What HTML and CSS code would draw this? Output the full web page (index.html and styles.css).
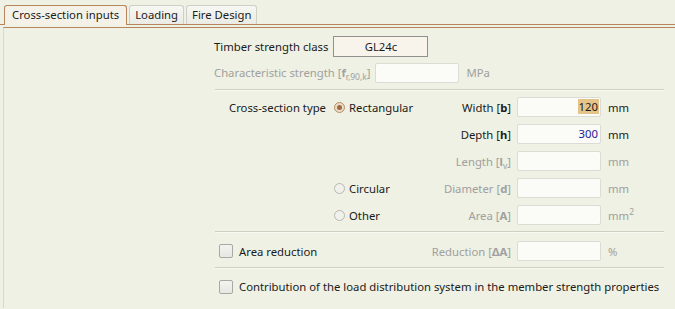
FILE: index.html
```html
<!DOCTYPE html>
<html lang="en">
<head>
<meta charset="UTF-8">
<meta name="viewport" content="width=device-width, initial-scale=1.0">
<title>Cross-section inputs</title>
<link rel="stylesheet" href="styles.css">
</head>
<body>
<div class="tabs">
  <div class="tab active">Cross-section inputs</div>
  <div class="tab">Loading</div>
  <div class="tab">Fire Design</div>
</div>
<div class="panel">
  <div class="form">
    <div class="row row-class">
      <span class="label">Timber strength class</span>
      <div class="class-box">GL24c</div>
    </div>
    <div class="row row-char">
      <span class="label muted">Characteristic strength [<b>f</b><sub>r,90,k</sub>]</span>
      <div class="field"></div>
      <span class="unit muted">MPa</span>
    </div>
    <div class="sep"></div>

    <div class="xs-grid">
      <span class="label xs-title">Cross-section type</span>
      <label class="radio-opt"><span class="radio checked"></span>Rectangular</label>
      <span class="label flabel">Width [<b>b</b>]</span>
      <div class="field"><span class="sel">120</span></div>
      <span class="unit">mm</span>

      <span></span><span></span>
      <span class="label flabel">Depth [<b>h</b>]</span>
      <div class="field"><span class="val">300</span></div>
      <span class="unit">mm</span>

      <span></span><span></span>
      <span class="label flabel muted">Length [<b>l</b><sub>v</sub>]</span>
      <div class="field"></div>
      <span class="unit muted">mm</span>

      <span></span>
      <label class="radio-opt"><span class="radio"></span>Circular</label>
      <span class="label flabel muted">Diameter [<b>d</b>]</span>
      <div class="field"></div>
      <span class="unit muted">mm</span>

      <span></span>
      <label class="radio-opt"><span class="radio"></span>Other</label>
      <span class="label flabel muted">Area [<b>A</b>]</span>
      <div class="field"></div>
      <span class="unit muted">mm<sup>2</sup></span>
    </div>
    <div class="sep"></div>

    <div class="xs-grid red-grid">
      <label class="check-opt"><span class="check"></span>Area reduction</label>
      <span class="label flabel muted">Reduction [<b>&Delta;A</b>]</span>
      <div class="field"></div>
      <span class="unit muted">%</span>
    </div>
    <div class="sep"></div>

    <label class="check-opt contrib"><span class="check"></span>Contribution of the load distribution system in the member strength properties</label>
  </div>
</div>
</body>
</html>
```
FILE: styles.css
```css
body {
  margin: 0;
  background-color: #eef1e3;
  font-family: "Noto Sans", "Liberation Sans", sans-serif;
  font-size: 11.3px;
  color: #1b1b1b;
  width: 675px;
  height: 309px;
  overflow: hidden;
}
.tabs {
  display: flex;
  align-items: flex-end;
  gap: 2px;
  padding: 5px 0 0 4px;
  height: 19px;
  border-bottom: 1px solid #b8865c;
}
.tab {
  height: 18px;
  line-height: 18px;
  padding: 0 5px;
  border: 1px solid #cfcfc8;
  border-bottom: none;
  border-radius: 3px 3px 0 0;
  background: linear-gradient(#f7f7f3, #ebebe5);
  color: #1b1b1b;
}
.tab.active {
  height: 19px;
  padding: 0 7px;
  border-color: #b8865c;
  background: #f4f2e8;
  position: relative;
  top: 1px;
}
.panel {
  margin-top: 2px;
  margin-left: 3px;
  border-top: 1px solid #b8865c;
  border-left: 1px solid #dcd8cc;
  height: 280px;
}
.form {
  margin-left: 210px;
  width: 450px;
  padding-top: 8px;
}
.label {
  white-space: nowrap;
}
.row {
  display: flex;
  align-items: center;
}
.row-class {
  height: 21px;
}
.row-class .label {
  margin-right: 5px;
}
.class-box {
  width: 93px;
  height: 19px;
  line-height: 19px;
  text-align: center;
  border: 1px solid #909090;
  background: #f8f3eb;
}
.row-char {
  margin-top: 5px;
  height: 21px;
}
.row-char .field {
  margin-left: 5px;
}
.row-char .unit {
  margin-left: 6px;
}
.muted {
  color: #a0a0a0;
}
b {
  font-weight: bold;
}
sub, sup {
  font-size: 8.5px;
  line-height: 0;
}
.field {
  width: 82px;
  height: 18px;
  border: 1px solid #dcdcd6;
  border-radius: 2px;
  background: #fbfbf8;
  text-align: right;
  line-height: 18px;
  box-sizing: content-box;
}
.sel {
  background: #e6c489;
  color: #1b1b1b;
  padding: 0 1px;
  margin-right: 1px;
}
.val {
  color: #1a1a9a;
  margin-right: 2px;
}
.sep {
  margin: 6px 0 0 1px;
  height: 1px;
  background: #cfd0c4;
  border-bottom: 1px solid #f8f9f2;
}
.xs-grid {
  display: grid;
  grid-template-columns: 114px 100px 71px 84px 1fr;
  grid-auto-rows: 20px;
  column-gap: 6px;
  row-gap: 7px;
  align-items: center;
  margin-top: 6px;
}
.xs-title {
  text-align: right;
  padding-right: 2px;
}
.flabel {
  text-align: right;
}
.unit {
  padding-left: 1px;
}
.radio-opt, .check-opt {
  display: flex;
  align-items: center;
  white-space: nowrap;
}
.radio {
  flex-shrink: 0;
  width: 9px;
  height: 9px;
  border: 1px solid #b8b8b0;
  border-radius: 50%;
  background: #f1f1ec;
  margin-right: 4px;
  position: relative;
}
.radio.checked {
  border-color: #b98c62;
  background: #e9dccd;
}
.radio.checked::after {
  content: "";
  position: absolute;
  left: 2px;
  top: 2px;
  width: 5px;
  height: 5px;
  border-radius: 50%;
  background: #a06a3a;
}
.red-grid {
  grid-template-columns: 211px 80px 84px 1fr;
  margin-top: 8px;
}
.check {
  flex-shrink: 0;
  width: 12px;
  height: 12px;
  border: 1px solid #a8a8a4;
  border-radius: 2px;
  background: linear-gradient(#f3f3f0, #e6e6e2);
  margin: 0 6px 0 5px;
}
.contrib {
  margin-top: 10px;
}
```
